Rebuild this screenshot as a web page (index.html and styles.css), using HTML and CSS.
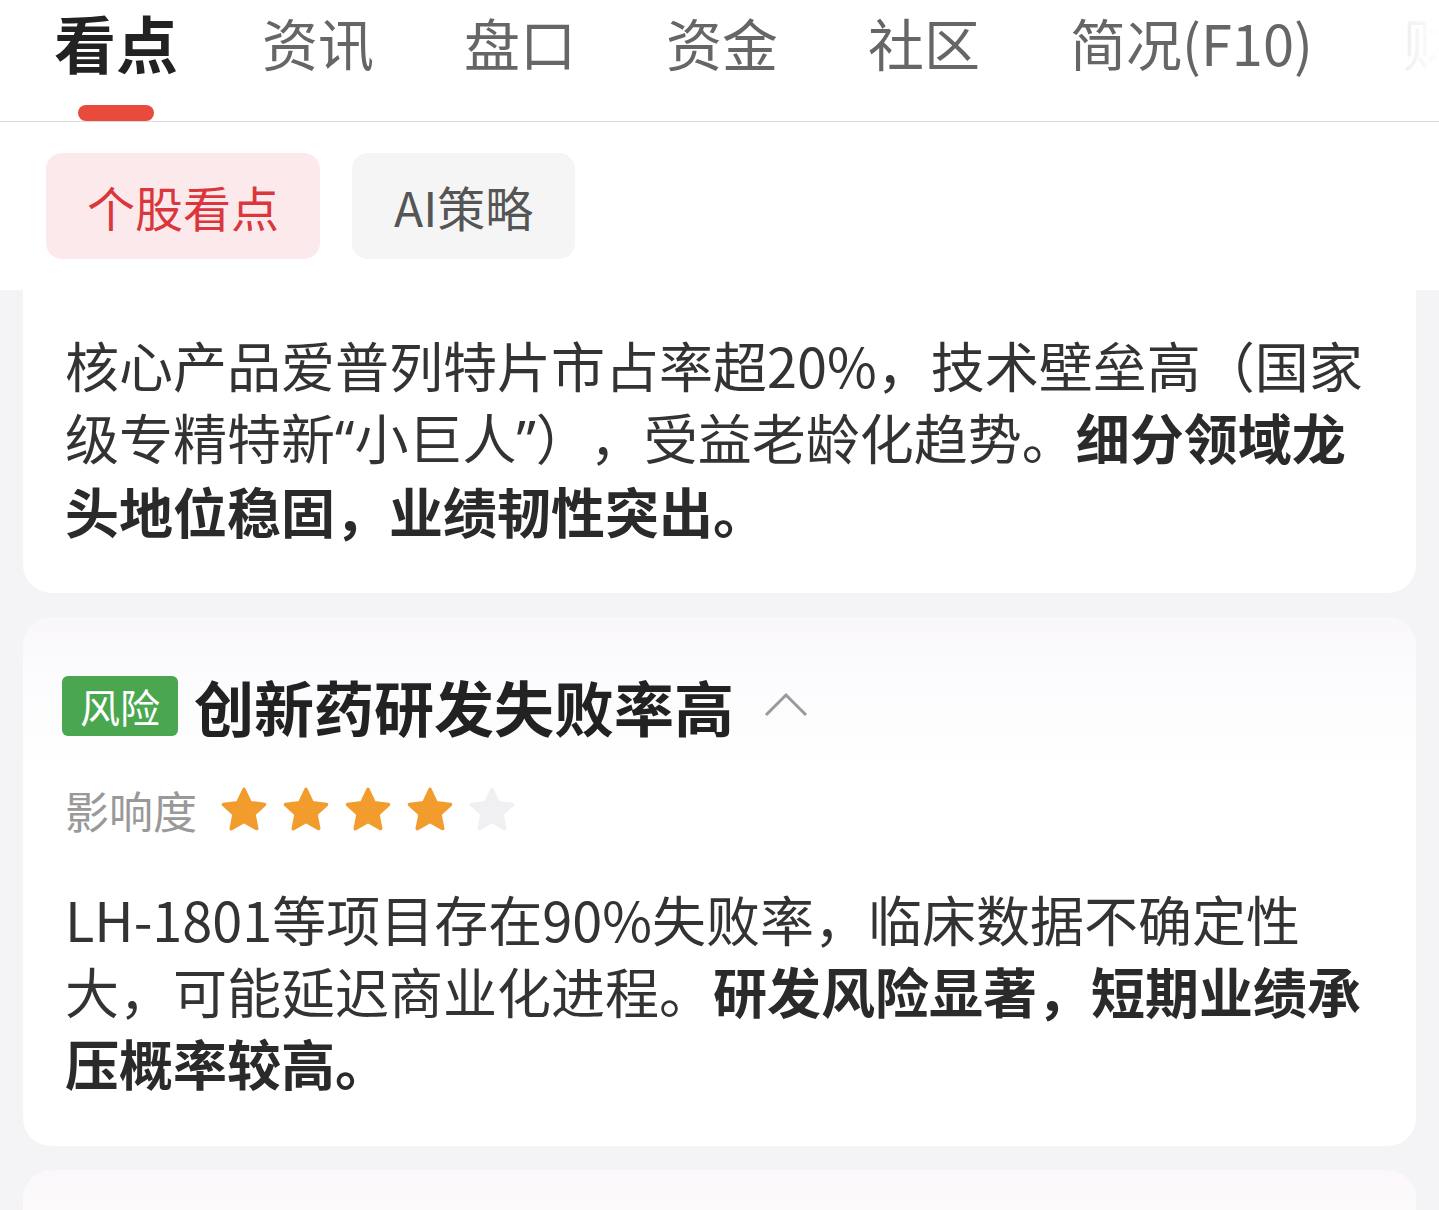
FILE: index.html
```html
<!DOCTYPE html>
<html lang="zh-CN">
<head>
<meta charset="utf-8">
<title>看点</title>
<link rel="stylesheet" href="styles.css">
</head>
<body>
<div class="page">
  <nav class="tabbar">
    <div class="tab active"><span class="tab-text">看点</span><span class="indicator"></span></div>
    <div class="tab"><span class="tab-text">资讯</span></div>
    <div class="tab"><span class="tab-text">盘口</span></div>
    <div class="tab"><span class="tab-text">资金</span></div>
    <div class="tab"><span class="tab-text">社区</span></div>
    <div class="tab"><span class="tab-text">简况(F10)</span></div>
    <div class="tab"><span class="tab-text">财务</span></div>
  </nav>
  <div class="subtabs">
    <div class="pill pill-active">个股看点</div>
    <div class="pill">AI策略</div>
  </div>
  <main class="content">
    <section class="card card-cut">
      <p class="body-text">核心产品爱普列特片市占率超20%，技术壁垒高（国家级专精特新<span class="q">“</span>小巨人<span class="q">”</span>），受益老龄化趋势。<strong>细分领域龙头地位稳固，业绩韧性突出。</strong></p>
    </section>
    <section class="card card-tint">
      <div class="card-head">
        <span class="tag tag-risk">风险</span>
        <h2 class="card-title">创新药研发失败率高</h2>
        <svg class="chevron" width="44" height="26" viewBox="0 0 44 26"><polyline points="2,24 22,4 42,24" fill="none" stroke="#9a9a9a" stroke-width="3"/></svg>
      </div>
      <div class="impact">
        <span class="impact-label">影响度</span>
        <div class="stars">
          <svg class="star" viewBox="0 0 24 24"><polygon points="12,2.5 14.9,8.6 21.5,9.4 16.6,14 17.9,20.6 12,17.3 6.1,20.6 7.4,14 2.5,9.4 9.1,8.6" fill="#f29c2e" stroke="#f29c2e" stroke-width="1.6" stroke-linejoin="round"/></svg>
          <svg class="star" viewBox="0 0 24 24"><polygon points="12,2.5 14.9,8.6 21.5,9.4 16.6,14 17.9,20.6 12,17.3 6.1,20.6 7.4,14 2.5,9.4 9.1,8.6" fill="#f29c2e" stroke="#f29c2e" stroke-width="1.6" stroke-linejoin="round"/></svg>
          <svg class="star" viewBox="0 0 24 24"><polygon points="12,2.5 14.9,8.6 21.5,9.4 16.6,14 17.9,20.6 12,17.3 6.1,20.6 7.4,14 2.5,9.4 9.1,8.6" fill="#f29c2e" stroke="#f29c2e" stroke-width="1.6" stroke-linejoin="round"/></svg>
          <svg class="star" viewBox="0 0 24 24"><polygon points="12,2.5 14.9,8.6 21.5,9.4 16.6,14 17.9,20.6 12,17.3 6.1,20.6 7.4,14 2.5,9.4 9.1,8.6" fill="#f29c2e" stroke="#f29c2e" stroke-width="1.6" stroke-linejoin="round"/></svg>
          <svg class="star" viewBox="0 0 24 24"><polygon points="12,2.5 14.9,8.6 21.5,9.4 16.6,14 17.9,20.6 12,17.3 6.1,20.6 7.4,14 2.5,9.4 9.1,8.6" fill="#f0eff2" stroke="#f0eff2" stroke-width="1.6" stroke-linejoin="round"/></svg>
        </div>
      </div>
      <p class="body-text body-spaced">LH-1801等项目存在90%失败率，临床数据不确定性大，可能延迟商业化进程。<strong>研发风险显著，短期业绩承压概率较高。</strong></p>
    </section>
    <section class="card card-tint card-next"></section>
  </main>
</div>
</body>
</html>
```

FILE: styles.css
```css
* { box-sizing: border-box; }
html, body { margin: 0; padding: 0; }
body {
  font-family: "Noto Sans CJK SC", "Noto Sans", sans-serif;
  background: #ffffff;
  color: #333;
  text-spacing-trim: space-all;
}
.page {
  width: 1439px;
  height: 1210px;
  overflow: hidden;
  background: #f4f3f6;
}
.tabbar {
  position: relative;
  display: flex;
  align-items: flex-start;
  height: 122px;
  padding-left: 15px;
  background: #fff;
  border-bottom: 1px solid #dcdcdc;
  white-space: nowrap;
  overflow: hidden;
}
.tabbar::after {
  content: "";
  position: absolute;
  right: 0;
  top: 0;
  width: 90px;
  height: 100px;
  background: linear-gradient(90deg, rgba(255,255,255,0), rgba(255,255,255,0.85) 45%, #fff);
}
.tab {
  flex: none;
  display: flex;
  flex-direction: column;
  align-items: center;
  padding: 0 45px;
  font-size: 56px;
  line-height: 84px;
  color: #666;
}
.tab.active {
  padding: 0 39px;
  font-size: 62px;
  font-weight: 600;
  color: #222;
}
.indicator {
  display: block;
  width: 76px;
  height: 16px;
  margin-top: 21px;
  border-radius: 8px;
  background: #e84b3c;
}
.subtabs {
  display: flex;
  gap: 32px;
  height: 168px;
  padding: 31px 46px 0;
  background: #fff;
}
.pill {
  height: 106px;
  padding: 0 42px;
  border-radius: 16px;
  background: #f5f5f5;
  color: #555;
  font-size: 48px;
  line-height: 106px;
}
.pill-active {
  padding: 0 41px;
  background: #fce9ec;
  color: #d9373c;
}
.content {
  padding: 0 23px;
  display: flex;
  flex-direction: column;
  gap: 24px;
}
.card {
  background: #fff;
  border-radius: 28px;
  padding: 52px 42px 47px;
}
.card-cut {
  border-radius: 0 0 28px 28px;
  padding: 39px 42px 46px;
}
.card-tint {
  background: linear-gradient(180deg, #f9f7fb 0px, #fcfbfd 70px, #ffffff 150px);
}
.card-next {
  height: 300px;
  background: linear-gradient(180deg, #fbf7fa 0px, #ffffff 120px);
}
.body-text {
  margin: 0;
  font-size: 54px;
  line-height: 72px;
  color: #333;
}
.body-text strong {
  font-weight: 600;
  color: #2a2a2a;
}
.q {
  font-family: "Noto Sans", sans-serif;
}
.body-spaced {
  margin-top: 43px;
}
.card-head {
  display: flex;
  align-items: center;
  height: 74px;
}
.tag {
  height: 60px;
  margin-left: -3px;
  padding: 0 18px;
  border-radius: 6px;
  font-size: 40px;
  line-height: 60px;
  color: #fff;
}
.tag-risk {
  background: #4ba74f;
}
.card-title {
  margin: 0 0 0 16px;
  font-size: 60px;
  font-weight: 600;
  line-height: 74px;
  color: #222;
}
.chevron {
  margin-left: 30px;
  margin-top: -4px;
}
.impact {
  display: flex;
  align-items: center;
  height: 60px;
  margin-top: 37px;
}
.impact-label {
  font-size: 44px;
  line-height: 60px;
  color: #999;
}
.stars {
  display: flex;
  gap: 10px;
  margin-left: 21px;
}
.star {
  width: 52px;
  height: 52px;
}
```
